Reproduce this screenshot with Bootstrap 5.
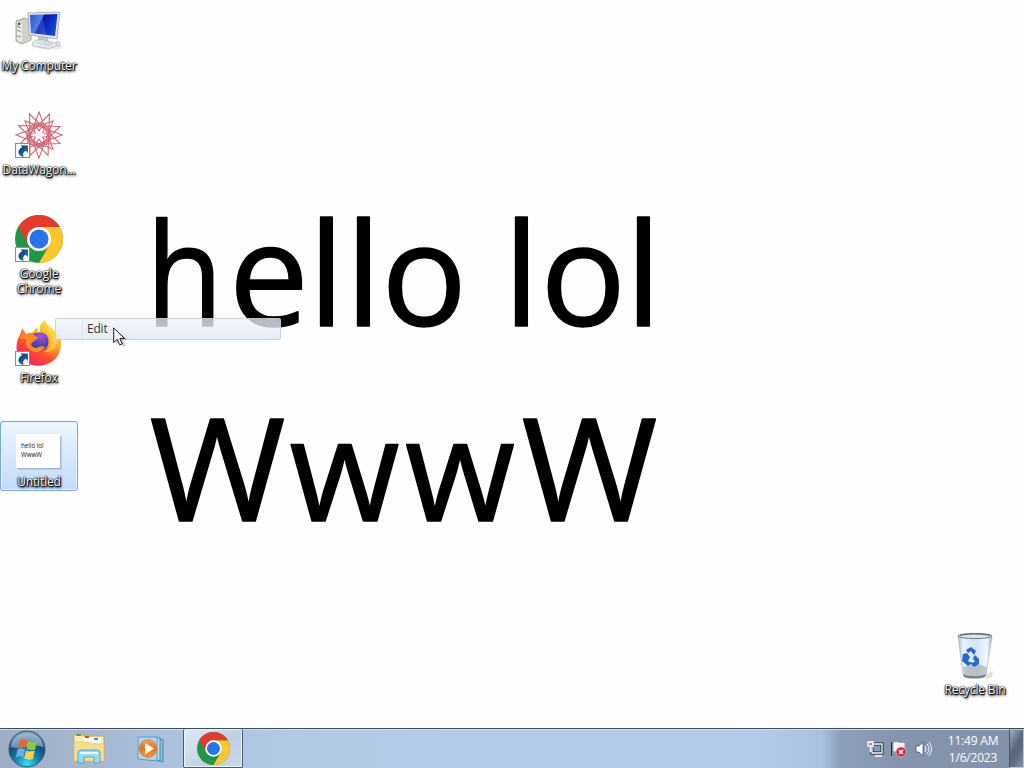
<!DOCTYPE html>
<html lang="en">
<head>
<meta charset="utf-8">
<meta name="viewport" content="width=device-width, initial-scale=1">
<title>Desktop</title>
<link href="https://cdn.jsdelivr.net/npm/bootstrap@5.3.0/dist/css/bootstrap.min.css" rel="stylesheet">
<style>
body{font-family:"Open Sans","Noto Sans",sans-serif;height:768px;background:#fefefe;color:#111}
.desk{height:728px}
.wallpaper{left:0;top:0;z-index:0}
.wallpaper text{font-family:"Open Sans",sans-serif;font-size:142px;fill:#010101;stroke:#010101;stroke-width:1.6;stroke-linejoin:round}
.shortcut{width:78px;height:104px;padding-top:8px;z-index:1}
.shortcut svg{width:48px;height:48px;overflow:visible;flex:none}
.caption{font-size:12px;line-height:15px;margin-top:2px;color:#fff;text-align:center;white-space:nowrap;letter-spacing:-.15px;
 text-shadow:0 0 1px #000,0 0 2px #000,1px 1px 1px #000,0 1px 2px #111,1px 2px 3px #444}
.picked{height:70px;padding-top:4px;margin-top:5px;border:1px solid #7da7d3;border-radius:3px;background:linear-gradient(#edf5fe,#c1dafa);box-shadow:inset 0 0 0 1px #e9f3ff}
.picked .caption{margin-top:0}
.bin{right:10px;top:624px;width:78px}
.popup{left:55px;top:318px;width:226px;height:22px;z-index:3;border:1px solid rgba(175,202,225,.7);border-radius:2px;background:linear-gradient(rgba(242,244,248,.76),rgba(228,234,244,.84));font-size:12px;line-height:20px;padding-left:31px;color:#333;letter-spacing:-.2px}
.popup::before{content:"";width:1px;background:rgba(205,213,223,.5);left:26px;top:1px;bottom:1px;position:absolute}
.pointer{left:113px;top:327px;z-index:4}
.taskbar{height:40px;border-top:1px solid #3c4d62;box-shadow:inset 0 1px #d3dfec;background:linear-gradient(90deg,#9eacc1 0,#a4b5cc 70px,#acc2df 180px,#b3cae7 300px,#b3cbea 760px,#aac1e0 822px,#8da0ba 840px,#8494ac 900px,#8392a9 1024px)}
.start{width:58px}
.launch{width:62px}
.running{width:60px;margin-left:1px;border:1px solid #465b75;border-top:0;border-radius:2px;background:linear-gradient(135deg,#e1eaf5,#bfcfe2 60%,#ccd9e9);box-shadow:inset 0 0 0 1px #edf4fb}
.clock{width:72px;font-size:12px;line-height:17px;color:#fff;padding-top:3px;letter-spacing:-.2px}
.peek{width:15px;border:1px solid #b8c4d3;border-left-color:#48576b;background:linear-gradient(120deg,#9eabba,#59677a 45%,#5e6c80 65%,#8694a8)}
</style>
</head>
<body class="overflow-hidden">
<svg width="0" height="0" class="position-absolute">
<defs>
<linearGradient id="screen" x2="1" y2=".4"><stop stop-color="#1235b6"/><stop offset=".42" stop-color="#3974e8"/><stop offset=".48" stop-color="#0414a8"/><stop offset="1" stop-color="#1742d8"/></linearGradient>
<linearGradient id="arrow" x2="1" y2="1"><stop stop-color="#062c68"/><stop offset="1" stop-color="#3485c6"/></linearGradient>
<linearGradient id="flame" x1=".9" y1="0" x2=".25" y2="1"><stop stop-color="#fff34c"/><stop offset=".4" stop-color="#ffa82a"/><stop offset=".7" stop-color="#ff4930"/><stop offset="1" stop-color="#e72463"/></linearGradient>
<radialGradient id="violet" cx=".6" cy=".2"><stop stop-color="#a750e7"/><stop offset="1" stop-color="#4c43a6"/></radialGradient>
<linearGradient id="glass" x2="1"><stop stop-color="#adbfcc"/><stop offset=".16" stop-color="#e8f1fa"/><stop offset=".55" stop-color="#d3e5f6"/><stop offset=".86" stop-color="#f1f7fd"/><stop offset="1" stop-color="#9fadb8"/></linearGradient>
<radialGradient id="orb" cx=".5" cy=".9" r=".9"><stop stop-color="#39ddec"/><stop offset=".36" stop-color="#1583b0"/><stop offset=".65" stop-color="#144b78"/><stop offset="1" stop-color="#86a9c1"/></radialGradient>
<linearGradient id="folder" x2="0" y2="1"><stop stop-color="#fff6bb"/><stop offset="1" stop-color="#e9ce72"/></linearGradient>
<linearGradient id="play" x2="0" y2="1"><stop stop-color="#f3a35c"/><stop offset=".5" stop-color="#e7721e"/><stop offset="1" stop-color="#f59a38"/></linearGradient>
<g id="link"><rect x=".5" y="31.500" width="14" height="14" fill="#fcfdff" stroke="#829097"/><path d="M5.500 33.500H13V41l-2.300-2.300C8 40.500 7.500 42 8.800 45 3.500 44 2 40 5 36.800c.8-.8 1.500-1.200 2.300-1.500Z" fill="url(#arrow)"/></g>
<symbol id="chrome" viewBox="0 0 48 48"><circle cx="24" cy="24" r="24" fill="#239548"/><path d="M24 12H44.780A24 24 0 0 1 24 48L34.390 30Z" fill="#fcc72b"/><path d="M3.220 12A24 24 0 0 1 44.780 12H24L13.610 30Z" fill="#e33b2e"/><path d="M3.220 12 13.610 30 8 30 2 16Z" fill="#239548"/><circle cx="24" cy="24" r="12" fill="#fff"/><circle cx="24" cy="24" r="9.500" fill="#2874e8"/></symbol>
</defs>
</svg>

<main class="desk position-relative">
 <svg class="wallpaper position-absolute" width="1024" height="728">
  <text y="325.500" x="146" textLength="77" lengthAdjust="spacingAndGlyphs">h</text>
  <text y="325.500" x="229 308.500 345.500 381.500 420 503.500 540.500 625.500">ello lol</text>
  <text y="520.500" x="149.500" textLength="136" lengthAdjust="spacingAndGlyphs">W</text>
  <text y="520.500" x="289.500 405">ww</text>
  <text y="520.500" x="521.500" textLength="136" lengthAdjust="spacingAndGlyphs">W</text>
 </svg>

 <div class="d-flex flex-column">
  <div class="shortcut position-relative d-flex flex-column align-items-center">
   <svg viewBox="0 0 48 48"><ellipse cx="35" cy="39" rx="13" ry="3" fill="#eee"/><path d="M1 13 10 10l6 3v19L7 36 1 33Z" fill="#d0d2ce" stroke="#8a8d89" stroke-width=".7"/><path d="m2 14 5 3v17l-5-2Z" fill="#ecece8"/><path d="m2 18 4 2m-4 2 4 2m-4 4 4 1" stroke="#888"/><circle cx="4" cy="16" r="1.200" fill="#444"/><path d="m23 28 10 2 1 5-11-2Z" fill="#c0c4ca"/><path d="M13 5 45 4l-3 27-28-4Z" fill="#dfe4ea" stroke="#9aa3b0" stroke-width=".8"/><path d="m15 7 27.500-1L40 28l-24-3Z" fill="url(#screen)"/><path d="m15.200 7 12-.4 4 20.300L16 25Z" fill="#88a9f5" opacity=".25"/><path d="M17 35q4-4 11-3l13 3q3 2-2 4t-10 1l-11-2Z" fill="#edf0f0" stroke="#a8aeb2" stroke-width=".7"/><path d="m20 35 16 3m-13-4 15 3m-11-4 12 3m-15 3 7-5m-3 6 7-5" stroke="#c5cacd" stroke-width=".7"/><ellipse cx="43" cy="36" rx="2" ry="3" fill="#ddd" stroke="#aaa" stroke-width=".5"/></svg>
   <span class="caption">My Computer</span>
  </div>
  <div class="shortcut position-relative d-flex flex-column align-items-center">
   <svg viewBox="0 0 48 48"><g fill="none" stroke="#cd6a75" stroke-width="1.100" transform="translate(0 -1)"><path d="M24 1 38 38 1 24 38 10 24 47 10 10 47 24 10 38Z"/><path d="M14.500 3 45 32.500 4 34 34.500 3 33 44.500 3.500 14.500 45 15.500 15 44.500Z"/><circle cx="24" cy="18" r="5"/><circle cx="29.200" cy="21" r="5"/><circle cx="29.200" cy="27" r="5"/><circle cx="24" cy="30" r="5"/><circle cx="18.800" cy="27" r="5"/><circle cx="18.800" cy="21" r="5"/><circle cx="24" cy="24" r="12"/></g><circle cx="24" cy="23" r="4" fill="#fff" opacity=".85"/><use href="#link"/></svg>
   <span class="caption">DataWagon...</span>
  </div>
  <div class="shortcut position-relative d-flex flex-column align-items-center">
   <svg viewBox="0 0 48 48"><use href="#chrome" y="-1" width="48" height="48"/><use href="#link"/></svg>
   <span class="caption">Google<br>Chrome</span>
  </div>
  <div class="shortcut position-relative d-flex flex-column align-items-center">
   <svg viewBox="0 0 48 48"><path d="M7 8 11 14 18 12 22 7 23 13 25 11C24 5 27 2 30 0 31 6 39 8 42 15L44 13C48 23 46 35 38 41 29 48 15 47 7 40 0 34 0 23 5 15Z" fill="url(#flame)"/><path d="M17 15c6-4 14-3 16 3 2 7-2 13-9 14-7 0-11-7-8-13Z" fill="url(#violet)"/><path d="M4 18c3-3 6-4 9-3 4-2 7 0 10 3l-5 4c-3 1-2 5 2 6 4 0 6-3 10-1-3 6-12 7-17 1-3-4-2-7-1-9Z" fill="#ff8a27"/><path d="M31 2c-3 6 4 10 5 16s-2 12-7 14c11 1 16-9 13-17-2-5-8-7-11-13Z" fill="#ffe14a" opacity=".55"/><use href="#link"/></svg>
   <span class="caption">Firefox</span>
  </div>
  <div class="shortcut picked position-relative d-flex flex-column align-items-center">
   <svg viewBox="0 0 48 48"><rect x="3" y="10" width="43.500" height="33.500" fill="#7990ac" opacity=".55"/><rect x="1" y="8" width="44" height="34" fill="#fff"/><g font-family="Open Sans" font-size="6.200" fill="#111"><text x="6" y="22">hello lol</text><text x="6" y="31">WwwW</text></g></svg>
   <span class="caption">Untitled</span>
  </div>
 </div>

 <div class="shortcut bin position-absolute d-flex flex-column align-items-center">
  <svg viewBox="0 0 48 48"><path d="m34 43 8-4-1 6-6 2" fill="#ddd"/><path d="m7 4 5 38c4 4 19 4 23 0L41 4Z" fill="url(#glass)" stroke="#a9b5bf" stroke-width=".7"/><path d="m12 36 1 7c5 4 17 4 22 0l1-7c-7-5-17-5-24 0Z" fill="#a1a7ad" opacity=".6"/><path d="M12 42c5 3 18 3 23 0l-1 3c-5 2-16 2-21 0Z" fill="#777f87"/><ellipse cx="24" cy="4" rx="17" ry="2.600" fill="#dce3e9" stroke="#717d88"/><path d="M9 3.500c6-2 23-2 30 0" fill="none" stroke="#505d68"/><g fill="#2868c9"><path d="m15 18 5-3 5 4-2 4-3-4-3 2Z"/><path d="m12 22 4-1 3 4-2 4 4 2-4 3-6-5Z"/><path d="m24 23 4 4v5l-5 3-4-4 5-1-2-4Z"/></g></svg>
  <span class="caption">Recycle Bin</span>
 </div>

 <div class="popup position-absolute">Edit</div>
 <svg class="pointer position-absolute" width="15" height="21" viewBox="0 0 15 21"><path d="m3 3 0 15 4-3 3 5 3-1-3-6h5Z" fill="#777" opacity=".35"/><path d="M.7 1v14.500l3.500-3.200 2.600 5.600 2.500-1-2.500-5.500h4.700Z" fill="#fff" stroke="#16162a"/></svg>
</main>

<nav class="taskbar d-flex align-items-stretch">
 <div class="start d-flex align-items-center ps-2">
  <svg width="38" height="38" viewBox="0 0 38 38"><circle cx="19" cy="19" r="18" fill="url(#orb)" stroke="#335974"/><path d="M3 17C4 7 12 3 19 3s15 4 16 14c-9-4-23 3-32 0Z" fill="#cbdce7" opacity=".5"/><path d="M12 10.500c3-2 5-1 7.500 0l-2 8c-3-2-5-1-7.500 0Z" fill="#e76532"/><path d="M20.500 11c3 2 5 1 8.500 0l-2 8.500c-3 1-5 1-8.500-.5Z" fill="#8dc64b"/><path d="M9.700 19.500c3-2 5-1 7.500 0l-2 8c-3-2-5-1-7.500 0Z" fill="#64b3ed"/><path d="M18.200 20.500c3 1.500 5 1 8.500 0l-2 8.500c-3 1-5 1-8.500-.5Z" fill="#ffd34b"/></svg>
 </div>
 <div class="launch d-flex align-items-center justify-content-center">
  <svg width="34" height="32" viewBox="0 0 34 32"><path d="M2 3Q2 1 4 1h5l2 2h19q2 0 2 2v23H2Z" fill="url(#folder)" stroke="#c2a957"/><path d="M4 2h5" stroke="#4aaa54" stroke-width="2"/><path d="M11 4h8v5h-8Z" fill="#fffce7"/><path d="M13 4h4" stroke="#d64934" stroke-width="2"/><path d="M20 5h9v5h-9Z" fill="#fff"/><path d="M22 6h4" stroke="#468bd0" stroke-width="2"/><path d="M2 9h14l2 2h14v17H2Z" fill="#f4df91" stroke="#dbc16c" stroke-width=".6"/><path d="M6 30V20q0-3 3-3h16q3 0 3 3v10h-6v-6H12v6Z" fill="#9ad9ee" stroke="#55a7cc"/><path d="M8 20h18" stroke="#e3faff" stroke-width="2"/></svg>
 </div>
 <div class="launch d-flex align-items-center justify-content-center">
  <svg width="32" height="30" viewBox="0 0 32 30"><path d="m22 3 6 3v22l-7-2Z" fill="#8dbedb" stroke="#448aac"/><path d="m19 3 6 1v23l-6-1Z" fill="#b8ddf0" stroke="#448aac"/><path d="M3 3h19v24l-19-2Z" fill="#aed6ef" stroke="#5b9cbf"/><circle cx="13" cy="14.500" r="9" fill="url(#play)" stroke="#c87837" stroke-width=".5"/><path d="m10 9 9 5.500-9 6Z" fill="#fff"/></svg>
 </div>
 <div class="running d-flex align-items-center justify-content-center">
  <svg width="33" height="33"><use href="#chrome" width="33" height="33"/></svg>
 </div>
 <div class="ms-auto d-flex align-items-center">
  <svg width="66" height="20" viewBox="0 0 66 20" fill="none"><path d="M6 5h9v9H5V9" stroke="#17202f" stroke-width="3"/><path d="M6 5h9v9H5V9M1 3h5v4H1ZM3.500 7v6M8 17h7" stroke="#fff" stroke-width="1.300"/><path d="M25.500 3v14" stroke="#202838" stroke-width="3"/><path d="M26 3v14M27 4c4-2 5 2 10 0v8c-5 1-6-1-10 0Z" stroke="#fff" fill="#eef2f5"/><circle cx="34" cy="13" r="5" fill="#cc263b" stroke="#f1c9ce" stroke-width=".6"/><path d="m32 11 4 4m0-4-4 4" stroke="#fff" stroke-width="1.500"/><path d="M49 7h3l4-4v14l-4-4h-3Z" fill="#fff" stroke="#3b4657" stroke-width=".7"/><path d="M58 7q2 3 0 6M60 5q4 5 0 10M62 3q5 7 0 14" stroke="#eef4fa"/></svg>
 </div>
 <div class="clock text-center ms-1"><div>11:49 AM</div><div>1/6/2023</div></div>
 <div class="peek"></div>
</nav>
<script src="https://cdn.jsdelivr.net/npm/bootstrap@5.3.0/dist/js/bootstrap.bundle.min.js"></script>
</body>
</html>
